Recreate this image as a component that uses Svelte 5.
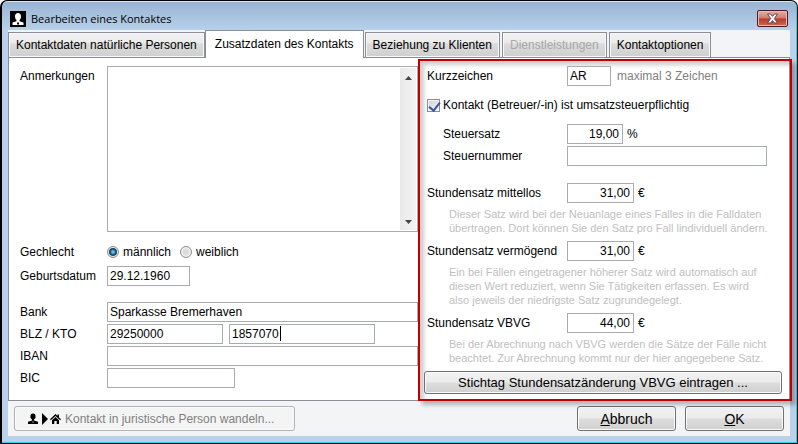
<script>
    let activeTab = "zusatz";
    let geschlecht = "m";
    let umsatzsteuer = true;

    let anmerkungen = "";
    let geburtsdatum = "29.12.1960";
    let bank = "Sparkasse Bremerhaven";
    let blz = "29250000";
    let kto = "1857070";
    let iban = "";
    let bic = "";

    let kurzzeichen = "AR";
    let steuersatz = "19,00";
    let steuernummer = "";

    const tabs = [
        { id: "person", label: "Kontaktdaten natürliche Personen" },
        { id: "zusatz", label: "Zusatzdaten des Kontakts" },
        { id: "klienten", label: "Beziehung zu Klienten" },
        { id: "dienst", label: "Dienstleistungen", disabled: true },
        { id: "optionen", label: "Kontaktoptionen" },
    ];

    let saetze = [
        {
            id: "mittellos",
            label: "Stundensatz mittellos",
            value: "31,00",
            help: [
                "Dieser Satz wird bei der Neuanlage eines Falles in die Falldaten",
                "übertragen. Dort können Sie den Satz pro Fall lindividuell ändern.",
            ],
        },
        {
            id: "vermoegend",
            label: "Stundensatz vermögend",
            value: "31,00",
            help: [
                "Ein bei Fällen eingetragener höherer Satz wird automatisch auf",
                "diesen Wert reduziert, wenn Sie Tätigkeiten erfassen. Es wird",
                "also jeweils der niedrigste Satz zugrundegelegt.",
            ],
        },
        {
            id: "vbvg",
            label: "Stundensatz VBVG",
            value: "44,00",
            help: [
                "Bei der Abrechnung nach VBVG werden die Sätze der Fälle nicht",
                "beachtet. Zur Abrechnung kommt nur der hier angegebene Satz.",
            ],
        },
    ];
</script>

<div class="window">
    <header class="titlebar">
        <svg class="app-icon" width="16" height="16" viewBox="0 0 16 16">
            <rect width="16" height="16" fill="#000" />
            <ellipse cx="8" cy="5.6" rx="3" ry="3.6" fill="#fff" />
            <path d="M6.5 8h3v2.2l4 1.2v2.6h-11v-2.6l4-1.2z" fill="#fff" />
            <path d="M7 11l1 1 1-1v2.5H7z" fill="#000" />
        </svg>
        <span class="title">Bearbeiten eines Kontaktes</span>
        <button class="close" aria-label="Schließen">
            <svg width="13" height="11" viewBox="0 0 13 11">
                <path d="M1.5 1h3l2 2.4L8.500 1h3L8.300 5.500l3.200 4.500h-3l-2-2.400L4.500 10h-3l3.200-4.500z" fill="#fff" stroke="#5b4a54" stroke-width="1" />
            </svg>
        </button>
    </header>

    <div class="client">
        <div class="tabs" role="tablist">
            {#each tabs as tab}
                <button
                    class="tab"
                    class:active={tab.id === activeTab}
                    role="tab"
                    aria-selected={tab.id === activeTab}
                    disabled={tab.disabled}
                    on:click={() => (activeTab = tab.id)}>{tab.label}</button>
            {/each}
        </div>

        <div class="panel">
            <div class="left">
                <div class="row notes">
                    <label for="anmerkungen">Anmerkungen</label>
                    <div class="memo">
                        <textarea id="anmerkungen" bind:value={anmerkungen}></textarea>
                        <div class="scrollbar">
                            <svg width="7" height="4" viewBox="0 0 7 4"><path d="M0 4L3.500 0L7 4z" fill="#444" /></svg>
                            <svg width="7" height="4" viewBox="0 0 7 4"><path d="M0 0L3.500 4L7 0z" fill="#444" /></svg>
                        </div>
                    </div>
                </div>
                <div class="row gender" role="radiogroup" aria-labelledby="geschlecht">
                    <span id="geschlecht">Gechlecht</span>
                    <div class="radios">
                        <label><input type="radio" value="m" bind:group={geschlecht} />männlich</label>
                        <label><input type="radio" value="w" bind:group={geschlecht} />weiblich</label>
                    </div>
                </div>
                <div class="row birth">
                    <label for="geburtsdatum">Geburtsdatum</label>
                    <input class="text date" id="geburtsdatum" bind:value={geburtsdatum} />
                </div>
                <div class="row">
                    <label for="bank">Bank</label>
                    <input class="text" id="bank" bind:value={bank} />
                </div>
                <div class="row">
                    <label for="blz">BLZ / KTO</label>
                    <div class="pair">
                        <input class="text blz" id="blz" bind:value={blz} />
                        <div class="kto">
                            <input class="text" aria-label="KTO" bind:value={kto} />
                            <span class="caret"></span>
                        </div>
                    </div>
                </div>
                <div class="row">
                    <label for="iban">IBAN</label>
                    <input class="text" id="iban" bind:value={iban} />
                </div>
                <div class="row">
                    <label for="bic">BIC</label>
                    <input class="text bic" id="bic" bind:value={bic} />
                </div>
            </div>

            <section class="right">
                <div class="line">
                    <label for="kurz">Kurzzeichen</label>
                    <input class="text short" id="kurz" maxlength="3" bind:value={kurzzeichen} />
                    <span class="hint">maximal 3 Zeichen</span>
                </div>
                <label class="line tax">
                    <input type="checkbox" bind:checked={umsatzsteuer} />
                    Kontakt (Betreuer/-in) ist umsatzsteuerpflichtig
                </label>
                <div class="line sub">
                    <label for="satz">Steuersatz</label>
                    <input class="text percent" id="satz" bind:value={steuersatz} />
                    <span class="unit">%</span>
                </div>
                <div class="line sub last">
                    <label for="nummer">Steuernummer</label>
                    <input class="text number" id="nummer" bind:value={steuernummer} />
                </div>
                {#each saetze as satz}
                    <div class="line">
                        <label for={satz.id}>{satz.label}</label>
                        <input class="text rate" id={satz.id} bind:value={satz.value} />
                        <span class="unit">€</span>
                    </div>
                    <p class="help">
                        {#each satz.help as zeile}
                            <span>{zeile}</span>
                        {/each}
                    </p>
                {/each}
                <button class="btn wide">Stichtag Stundensatzänderung VBVG eintragen ...</button>
            </section>
        </div>

        <footer>
            <button class="btn convert" disabled>
                <svg width="33" height="12" viewBox="0 0 33 12">
                    <ellipse cx="5" cy="3.500" rx="2.600" ry="3" fill="#000" />
                    <path d="M4 6h2v1.500l4 1.200V11H0V8.700l4-1.200z" fill="#000" />
                    <path d="M4.400 8.500h1.200L5 10.500z" fill="#fff" />
                    <path d="M14 0l6 6-6 6z" fill="#000" />
                    <path d="M22 6.300L27.500 1 29.500 2.900V1.500H31v2.900l2 1.900-.8.900L27.500 3l-4.700 4.200z" fill="#000" />
                    <path d="M24 7.200L27.500 4 31 7.200V11h-2.300V8h-2.400v3H24z" fill="#000" />
                </svg>
                Kontakt in juristische Person wandeln...
            </button>
            <button class="btn action"><span><u>A</u>bbruch</span></button>
            <button class="btn action"><span><u>O</u>K</span></button>
        </footer>
    </div>
</div>

<style>
    :global(body) {
        margin: 0;
        background: #fff;
    }

    * {
        box-sizing: border-box;
    }

    .window {
        display: flex;
        flex-direction: column;
        min-height: 100vh;
        padding: 0 7px 7px 6px;
        border: 1px solid #000;
        border-left-width: 2px;
        border-radius: 7px 7px 0 0;
        background: linear-gradient(#98b3d2, #b9d1ea 30px);
        box-shadow: inset -1px -1px 0 #2ed0e8, inset 0 1px 0 #d5e3f2;
        font-family: "Liberation Sans", Arial, sans-serif;
        font-size: 12px;
        color: #000;
    }

    button,
    input,
    textarea {
        font: inherit;
        color: inherit;
    }

    .titlebar {
        display: flex;
        align-items: center;
        height: 29px;
        padding: 6px 2px 0 2px;
    }

    .title {
        flex: 1;
        margin-left: 5px;
        font-family: "Open Sans", "Segoe UI", sans-serif;
        font-size: 11px;
        line-height: 18px;
    }

    .close {
        display: flex;
        align-items: center;
        justify-content: center;
        width: 31px;
        height: 17px;
        padding: 0;
        border: 1px solid #4a1c28;
        border-radius: 2px;
        background: linear-gradient(#e3b0a8, #cf7a6c 48%, #b8392a 52%, #cd6a50);
        box-shadow: inset 0 0 0 1px #e9b9b0;
    }

    .client {
        flex: 1;
        display: flex;
        flex-direction: column;
        background: #f3f4f6;
    }

    .tabs {
        display: flex;
        align-items: flex-end;
        height: 28px;
        border-bottom: 1px solid #8b8e98;
    }

    .tab {
        height: 26px;
        margin-right: 2px;
        margin-bottom: -1px;
        padding: 0 7px;
        border: 1px solid #8b8e98;
        background: linear-gradient(#f2f2f2, #ebebeb 40%, #dcdcdc 45%, #cfcfcf);
        box-shadow: inset 0 0 0 1px #f8f8f8;
    }

    .tab.active {
        height: 28px;
        margin-left: -2px;
        margin-right: 1px;
        padding: 0 9px 2px;
        border-bottom: none;
        background: #fff;
        box-shadow: none;
    }

    .tab:disabled {
        color: #a8a8a8;
    }

    .panel {
        flex: 1;
        display: flex;
        border: 1px solid #8b8e98;
        border-top: none;
        background: #fff;
    }

    .left {
        flex: 398;
        min-width: 0;
        display: flex;
        flex-direction: column;
        gap: 2px;
        padding: 8px 0 12px 11px;
    }

    .row {
        display: grid;
        grid-template-columns: 87px 1fr;
        align-items: center;
        min-height: 20px;
    }

    .notes {
        flex: 1;
        align-items: stretch;
    }

    .notes label {
        padding-top: 3px;
    }

    .gender {
        margin-top: 8px;
    }

    .birth {
        margin: 2px 0 14px;
    }

    .memo {
        display: flex;
        padding: 1px;
        border: 1px solid #a9abb2;
    }

    textarea {
        flex: 1;
        min-width: 0;
        padding: 2px;
        border: none;
        outline: none;
        resize: none;
    }

    .scrollbar {
        display: flex;
        flex-direction: column;
        justify-content: space-between;
        align-items: center;
        width: 16px;
        padding: 8px 0 6px;
        background: linear-gradient(90deg, #e9e9e9, #f3f3f3);
    }

    .radios {
        display: flex;
        gap: 9px;
    }

    .radios label {
        display: flex;
        align-items: center;
        gap: 4px;
    }

    input[type="radio"] {
        appearance: none;
        width: 12px;
        height: 12px;
        margin: 0;
        border: 1px solid #8a8d92;
        border-radius: 50%;
        background: radial-gradient(#d4d4d4, #f4f4f4);
        box-shadow: inset 0 0 0 1px #f6f6f6;
    }

    input[type="radio"]:checked {
        background: radial-gradient(circle, #5cc0ea 0 1px, #12466b 3px, #15374f 4px, #dfe3e6 5px);
    }

    input[type="checkbox"] {
        appearance: none;
        width: 13px;
        height: 13px;
        margin: 0 3px 0 0;
        border: 1px solid #8a8d92;
        background: linear-gradient(135deg, #cdd2da, #f4f5f7);
        box-shadow: inset 0 0 0 1px #f6f6f6;
    }

    input[type="checkbox"]:checked::after {
        content: "";
        display: block;
        width: 5px;
        height: 9px;
        margin: 0 0 0 3px;
        border: solid #3c569c;
        border-width: 0 2px 2px 0;
        transform: rotate(38deg);
    }

    .text {
        width: 100%;
        height: 20px;
        padding: 0 3px 0 2px;
        border: 1px solid #a9abb2;
        border-radius: 0;
        background: #fff;
        outline: none;
    }

    .date {
        width: 83px;
    }

    .bic {
        width: 128px;
    }

    .pair {
        display: flex;
        gap: 6px;
    }

    .blz {
        width: 116px;
    }

    .kto {
        position: relative;
        width: 146px;
    }

    .caret {
        position: absolute;
        top: 2px;
        left: 51px;
        width: 1px;
        height: 15px;
        background: #000;
    }

    .right {
        position: relative;
        flex: 358;
        min-width: 0;
        display: flex;
        flex-direction: column;
        margin: 1px -3px -1px 0;
        padding: 5px 8px 5px 4px;
        border: 2px solid #c00000;
        box-shadow: 4px 4px 4px rgba(0, 0, 0, 0.25), inset 4px 4px 4px rgba(0, 0, 0, 0.2);
    }

    .line {
        display: flex;
        align-items: center;
        height: 20px;
        padding-left: 3px;
    }

    .line label {
        width: 140px;
    }

    .tax {
        margin: 9px 0;
    }

    .sub {
        margin-bottom: 2px;
        padding-left: 19px;
    }

    .sub label {
        width: 124px;
    }

    .last {
        margin-bottom: 17px;
    }

    .short {
        width: 44px;
    }

    .percent {
        width: 56px;
        text-align: right;
    }

    .number {
        width: 200px;
    }

    .rate {
        width: 67px;
        text-align: right;
    }

    .unit {
        margin-left: 4px;
    }

    .hint {
        margin-left: 6px;
        color: #808080;
    }

    .help {
        margin: 4px 0 6px 25px;
        font-size: 11px;
        line-height: 14px;
        color: #c0c0c0;
    }

    .help span {
        display: block;
        white-space: nowrap;
    }

    .btn {
        border: 1px solid #707070;
        border-radius: 3px;
        background: linear-gradient(#f2f2f2, #ebebeb 48%, #dddddd 52%, #cfcfcf);
        box-shadow: inset 0 0 0 1px #fbfbfb;
    }

    .wide {
        height: 23px;
        margin-top: auto;
        padding: 0;
        font-size: 13px;
    }

    footer {
        display: flex;
        gap: 9px;
        padding: 5px 6px 5px;
    }

    .convert {
        display: flex;
        align-items: center;
        gap: 4px;
        height: 25px;
        margin-right: auto;
        padding: 0 20px 0 13px;
        border-color: #adb2b5;
        background: #f4f4f4;
        color: #808080;
    }

    .action {
        width: 99px;
        height: 25px;
        padding: 0;
        font-size: 14px;
    }
</style>
